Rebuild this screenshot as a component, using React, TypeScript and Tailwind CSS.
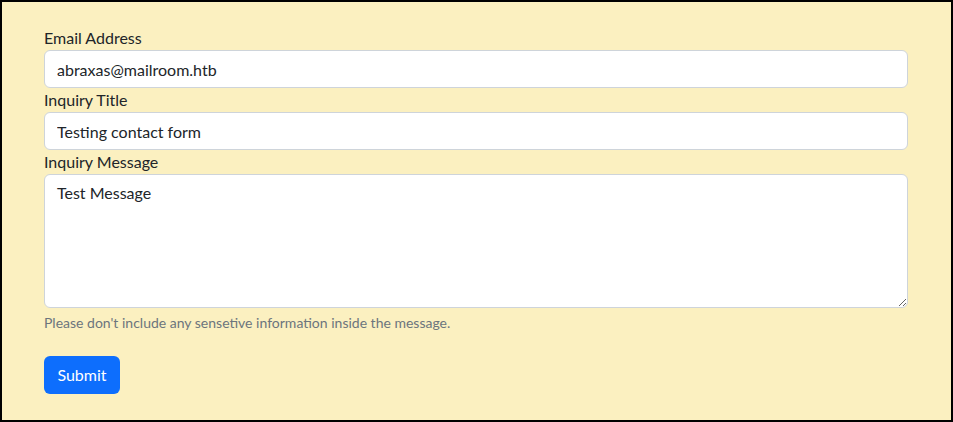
import React from 'react'

export default function App() {
  return (
    <div className="h-[422px] w-[953px] border-2 border-black bg-[#fbf0c0] pl-[42px] pr-[43px] pt-6 font-['Lato',sans-serif] text-[#212529]">
      <form onSubmit={(e) => e.preventDefault()} className="flex flex-col">
        <label className="text-base leading-6">Email Address</label>
        <input
          type="email"
          defaultValue="abraxas@mailroom.htb"
          className="h-[38px] w-full rounded-md border border-[#ced4da] bg-white px-3 text-base leading-6 text-[#212529] outline-none"
        />
        <label className="text-base leading-6">Inquiry Title</label>
        <input
          type="text"
          defaultValue="Testing contact form"
          className="h-[38px] w-full rounded-md border border-[#ced4da] bg-white px-3 text-base leading-6 text-[#212529] outline-none"
        />
        <label className="text-base leading-6">Inquiry Message</label>
        <textarea
          defaultValue="Test Message"
          className="block h-[134px] w-full rounded-md border border-[#ced4da] bg-white px-3 py-1.5 text-base leading-6 text-[#212529] outline-none"
        />
        <div className="mt-1 text-sm leading-[21px] text-[#6c757d]">
          Please don't include any sensetive information inside the message.
        </div>
        <div className="mt-[23px]">
          <button
            type="submit"
            className="h-[38px] w-[76px] rounded-md bg-[#0d6efd] text-base leading-6 text-white"
          >
            Submit
          </button>
        </div>
      </form>
    </div>
  )
}
